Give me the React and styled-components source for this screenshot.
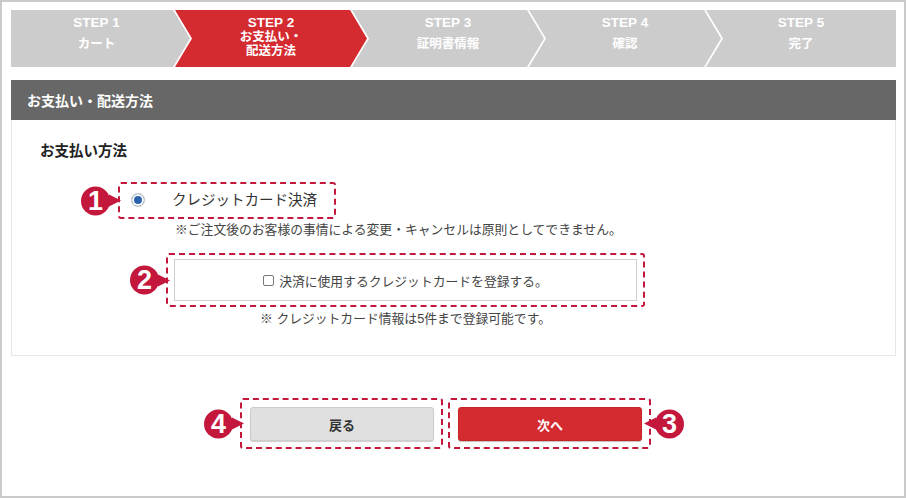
import React from "react"
import styled, { createGlobalStyle, css } from "styled-components"

const GlobalStyle = createGlobalStyle`
  * {
    box-sizing: border-box;
  }

  body {
    margin: 0;
    background: #fff;
    font-family: "Liberation Sans", "Noto Sans CJK JP", sans-serif;
    color: #333;
  }
`

const RED = "#d42b30"
const MARK = "#c4173c"

const Frame = styled.div`
  height: 498px;
  border: 2px solid #cacaca;
  padding: 8px 8px 0 9px;
`

const Stepper = styled.div`
  display: flex;
  height: 57px;
  margin-bottom: 13px;
`

const shapes = {
  first: "polygon(0 0, calc(100% - 17px) 0, 100% 50%, calc(100% - 17px) 100%, 0 100%)",
  middle:
    "polygon(0 0, calc(100% - 17px) 0, 100% 50%, calc(100% - 17px) 100%, 0 100%, 17px 50%)",
  last: "polygon(0 0, 100% 0, 100% 100%, 0 100%, 17px 50%)",
}

const Step = styled.div`
  display: flex;
  flex-direction: column;
  align-items: center;
  padding-top: 6px;
  color: #fff;
  font-weight: bold;
  text-align: center;
  background: ${p => (p.$active ? RED : "#cdcccc")};
  clip-path: ${p => shapes[p.$shape]};
  ${p =>
    p.$shape === "first" &&
    css`
      width: 179px;
      padding-right: 8px;
    `}
  ${p =>
    p.$shape === "middle" &&
    css`
      width: 192px;
      margin-left: -15px;
    `}
  ${p =>
    p.$shape === "last" &&
    css`
      flex: 1;
      margin-left: -15px;
    `}
`

const StepNo = styled.div`
  font-size: 13.5px;
  line-height: 14px;
`

const StepLabel = styled.div`
  height: 29px;
  display: flex;
  align-items: center;
  font-size: 12.5px;
  line-height: 13.5px;
`

const SectionHead = styled.div`
  height: 40px;
  display: flex;
  align-items: center;
  padding-left: 16px;
  background: #666766;
  color: #fff;
  font-size: 14px;
  font-weight: bold;
`

const Card = styled.div`
  border: 1px solid #e8e8e8;
  border-top: none;
  padding: 22px 28px 28px;
`

const CardTitle = styled.div`
  font-size: 14.5px;
  line-height: 18px;
  font-weight: bold;
  color: #222;
`

const Highlight = styled.div`
  position: relative;
  border: 2px dashed ${MARK};
  border-radius: 3px;
`

const RadioOption = styled(Highlight)`
  display: flex;
  align-items: center;
  gap: 27px;
  width: fit-content;
  margin: 22px 0 0 78px;
  padding: 6px 17px 7px 11px;
`

const Radio = styled.span`
  width: 14px;
  height: 14px;
  border-radius: 50%;
  border: 1px solid #c9c9c9;
  background: #2d62ad;
  box-shadow: inset 0 0 0 2px #fff;
`

const OptionLabel = styled.span`
  font-size: 14.5px;
  line-height: 20px;
  color: #333;
`

const Details = styled.div`
  width: 479px;
  margin-left: 126px;
`

const Note = styled.div`
  font-size: 12.8px;
  line-height: 16px;
  color: #444;
  white-space: nowrap;
  text-align: ${p => (p.$center ? "center" : "left")};
  margin-top: ${p => p.$top}px;
  padding-left: ${p => p.$indent || 0}px;
`

const RegisterOption = styled(Highlight)`
  margin-top: 15px;
  padding: 4px 6px 4px 6px;
`

const RegisterBox = styled.label`
  height: 42px;
  display: flex;
  align-items: center;
  justify-content: center;
  gap: 5px;
  border: 1px solid #cfcfcf;
  font-size: 12.8px;
  color: #444;
`

const CheckBox = styled.span`
  width: 11px;
  height: 11px;
  border: 1px solid #777;
  border-radius: 2px;
  background: #fff;
`

const Actions = styled.div`
  display: flex;
  justify-content: center;
  gap: 5px;
  margin-top: 42px;
  padding-right: 16px;
`

const ActionSlot = styled(Highlight)`
  padding: 7px 7px 6px 8px;
`

const Button = styled.button`
  width: 184px;
  height: 34px;
  border-radius: 3px;
  font-family: inherit;
  font-size: 13px;
  font-weight: bold;
  cursor: pointer;
  ${p =>
    p.$primary
      ? css`
          background: ${RED};
          border: 1px solid #c92428;
          color: #fff;
          box-shadow: 0 1px 1px rgba(0, 0, 0, 0.25);
        `
      : css`
          background: #e0e0e0;
          border: 1px solid #cdcdcd;
          color: #333;
          box-shadow: 0 1px 1px rgba(0, 0, 0, 0.2);
        `}
`

const Badge = styled.span`
  position: absolute;
  top: 50%;
  transform: translateY(-50%);
  width: 29px;
  height: 29px;
  border-radius: 50%;
  background: ${MARK};
  color: #fff;
  font-family: "Liberation Sans", sans-serif;
  font-size: 27px;
  font-weight: bold;
  line-height: 1;
  display: flex;
  align-items: center;
  justify-content: center;
  ${p =>
    p.$side === "left"
      ? css`
          right: calc(100% + ${p.$gap}px);
        `
      : css`
          left: calc(100% + ${p.$gap}px);
        `}

  &::after {
    content: "";
    position: absolute;
    top: 50%;
    transform: translateY(-50%);
    border-top: 6px solid transparent;
    border-bottom: 6px solid transparent;
    ${p =>
      p.$side === "left"
        ? css`
            left: calc(100% - 1px);
            border-left: 12px solid ${MARK};
          `
        : css`
            right: calc(100% - 1px);
            border-right: 12px solid ${MARK};
          `}
  }
`

const steps = [
  { no: "STEP 1", label: ["カート"] },
  { no: "STEP 2", label: ["お支払い・", "配送方法"], active: true },
  { no: "STEP 3", label: ["証明書情報"] },
  { no: "STEP 4", label: ["確認"] },
  { no: "STEP 5", label: ["完了"] },
]

export default function App() {
  return (
    <>
      <GlobalStyle />
      <Frame>
        <Stepper>
          {steps.map((step, i) => (
            <Step
              key={step.no}
              $active={step.active}
              $shape={i === 0 ? "first" : i === steps.length - 1 ? "last" : "middle"}
            >
              <StepNo>{step.no}</StepNo>
              <StepLabel>
                <div>
                  {step.label.map(line => (
                    <div key={line}>{line}</div>
                  ))}
                </div>
              </StepLabel>
            </Step>
          ))}
        </Stepper>

        <SectionHead>お支払い・配送方法</SectionHead>
        <Card>
          <CardTitle>お支払い方法</CardTitle>
          <RadioOption>
            <Badge $side="left" $gap={10}>1</Badge>
            <Radio />
            <OptionLabel>クレジットカード決済</OptionLabel>
          </RadioOption>
          <Details>
            <Note $top={3} $indent={9}>
              ※ご注文後のお客様の事情による変更・キャンセルは原則としてできません。
            </Note>
            <RegisterOption>
              <Badge $side="left" $gap={9}>2</Badge>
              <RegisterBox>
                <CheckBox />
                決済に使用するクレジットカードを登録する。
              </RegisterBox>
            </RegisterOption>
            <Note $top={4} $center>
              ※ クレジットカード情報は5件まで登録可能です。
            </Note>
          </Details>
        </Card>

        <Actions>
          <ActionSlot>
            <Badge $side="left" $gap={9}>4</Badge>
            <Button>戻る</Button>
          </ActionSlot>
          <ActionSlot>
            <Button $primary>次へ</Button>
            <Badge $side="right" $gap={6}>3</Badge>
          </ActionSlot>
        </Actions>
      </Frame>
    </>
  )
}
